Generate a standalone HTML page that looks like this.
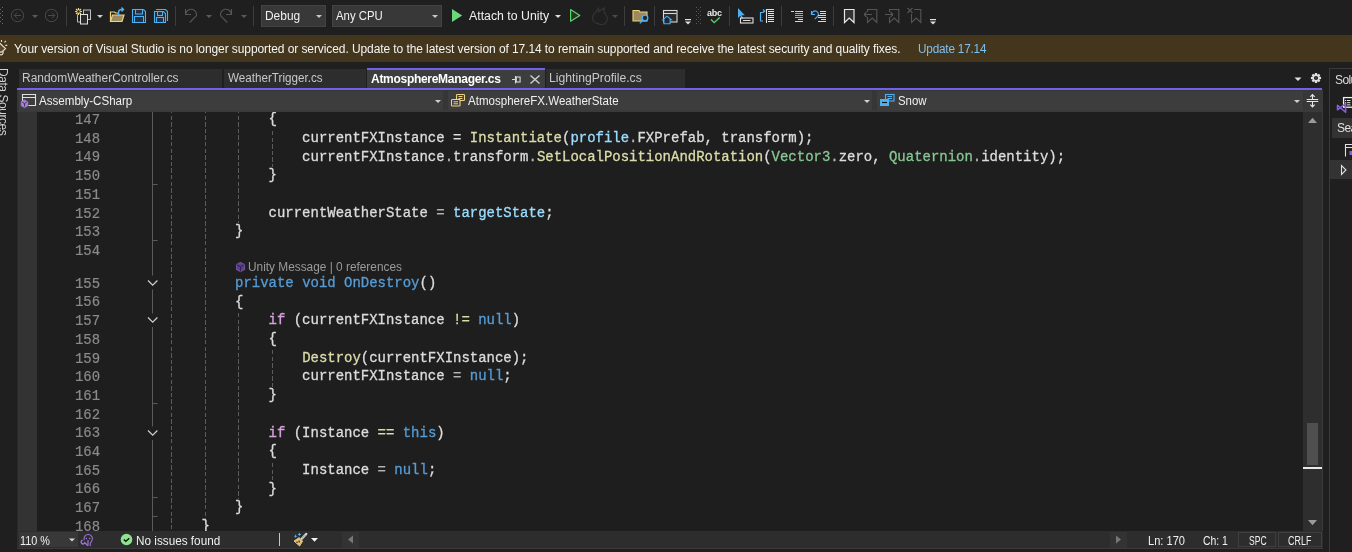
<!DOCTYPE html><html><head><meta charset="utf-8"><style>
*{margin:0;padding:0;box-sizing:border-box}
html,body{width:1352px;height:552px;overflow:hidden;background:#1f1f1f;position:relative;font-family:"Liberation Sans",sans-serif;color:#dcdcdc}
.a{position:absolute}
.ui{position:absolute;font-family:"Liberation Sans",sans-serif;font-size:12px;line-height:14px;white-space:pre}
.code{position:absolute;-webkit-text-stroke:0.3px currentColor;font-family:"Liberation Mono",monospace;font-size:13.98px;line-height:18.7px;white-space:pre;color:#dcdcdc}
.ln{position:absolute;-webkit-text-stroke:0.2px currentColor;font-family:"Liberation Mono",monospace;font-size:13.93px;line-height:18.7px;color:#8a8a8a;text-align:right;width:60px;white-space:pre}
.kw{color:#569cd6}.ctl{color:#d8a0df}.fn{color:#dcdcaa}.par{color:#9cdcfe}.st{color:#86c691}.op{color:#b4b4b4}
.guide{position:absolute;width:1px;background:repeating-linear-gradient(to bottom,#5c5c5c 0 4.4px,transparent 4.4px 6.6px)}
</style></head><body><div class="a" style="left:0;top:0;width:1352px;height:552px;will-change:transform;overflow:hidden">
<div class="a" style="left:0px;top:0px;width:1352px;height:35px;background:#1f1f1f;"></div>
<div class="a" style="left:261px;top:5px;width:65px;height:22px;background:#383838;border:1px solid #434343"></div>
<div class="ui" style="left:264.61px;top:9px;color:#f0f0f0;transform:scaleX(0.9941);transform-origin:0 0;">Debug</div>
<div class="a" style="left:332px;top:5px;width:110px;height:22px;background:#383838;border:1px solid #434343"></div>
<div class="ui" style="left:335.80px;top:9px;color:#f0f0f0;transform:scaleX(0.9469);transform-origin:0 0;">Any CPU</div>
<div class="ui" style="left:469.00px;top:9px;color:#f0f0f0;transform:scaleX(1.0256);transform-origin:0 0;">Attach to Unity</div>
<div class="ui" style="left:707px;top:8px;font-size:9px;line-height:10px;font-weight:bold;color:#e8e8e8;letter-spacing:-0.2px">abc</div>
<div class="a" style="left:0px;top:35px;width:1352px;height:27px;background:#44361c;"></div>
<div class="ui" style="left:14.00px;top:41.5px;color:#f4f4f4;letter-spacing:-0.085px">Your version of Visual Studio is no longer supported or serviced. Update to the latest version of 17.14 to remain supported and receive the latest security and quality fixes.</div>
<div class="ui" style="left:918.02px;top:41.5px;color:#7cc0f4;transform:scaleX(0.9797);transform-origin:0 0;letter-spacing:-0.2px">Update 17.14</div>
<div class="a" style="left:19px;top:69px;width:203px;height:19px;background:#2d2d2d;"></div>
<div class="ui" style="left:22.10px;top:70.5px;color:#c8c8c8;transform:scaleX(0.9962);transform-origin:0 0;">RandomWeatherController.cs</div>
<div class="a" style="left:224px;top:69px;width:142px;height:19px;background:#2d2d2d;"></div>
<div class="ui" style="left:228.10px;top:70.5px;color:#c8c8c8;transform:scaleX(0.9711);transform-origin:0 0;">WeatherTrigger.cs</div>
<div class="a" style="left:367px;top:68px;width:178px;height:20px;background:#3d3d3d;border-top:2px solid #7262ea"></div>
<div class="ui" style="left:371.10px;top:71.5px;color:#ffffff;transform:scaleX(1.0015);transform-origin:0 0;font-weight:bold;letter-spacing:-0.3px">AtmosphereManager.cs</div>
<div class="a" style="left:546px;top:69px;width:139px;height:19px;background:#2d2d2d;"></div>
<div class="ui" style="left:549.38px;top:70.5px;color:#c8c8c8;transform:scaleX(1.0156);transform-origin:0 0;">LightingProfile.cs</div>
<div class="a" style="left:17px;top:88px;width:1305px;height:2px;background:#7262ea;"></div>
<div class="a" style="left:17px;top:90px;width:1305px;height:22px;background:#363636;"></div>
<div class="a" style="left:19px;top:91px;width:424px;height:19px;background:#3d3d3d;"></div>
<div class="a" style="left:448px;top:91px;width:424px;height:19px;background:#3d3d3d;"></div>
<div class="a" style="left:877px;top:91px;width:426px;height:19px;background:#3d3d3d;"></div>
<div class="a" style="left:1304px;top:91px;width:18px;height:19px;background:#383838;"></div>
<div class="ui" style="left:38.70px;top:93.5px;color:#f0f0f0;transform:scaleX(0.9649);transform-origin:0 0;">Assembly-CSharp</div>
<div class="ui" style="left:468.00px;top:93.5px;color:#f0f0f0;transform:scaleX(0.9622);transform-origin:0 0;">AtmosphereFX.WeatherState</div>
<div class="ui" style="left:897.70px;top:93.5px;color:#f0f0f0;transform:scaleX(0.9500);transform-origin:0 0;">Snow</div>
<div class="a" style="left:17px;top:110px;width:1305px;height:2px;background:#3a3a3a;"></div>
<div class="a" style="left:17px;top:112px;width:1286px;height:419px;background:#1e1e1e;"></div>
<div class="a" style="left:17px;top:112px;width:1px;height:419px;background:#2a2a2a;"></div>
<div class="a" style="left:18px;top:112px;width:19px;height:419px;background:#333333;"></div>
<div class="a" style="left:17px;top:112px;width:1286px;height:419px;overflow:hidden">
<div class="guide" style="left:154px;top:-2.8px;height:421.8px"></div>
<div class="guide" style="left:188px;top:-2.8px;height:421.8px"></div>
<div class="guide" style="left:221px;top:-2.8px;height:114.0px"></div>
<div class="guide" style="left:255px;top:18.5px;height:36.6px"></div>
<div class="guide" style="left:221px;top:200.8px;height:186.3px"></div>
<div class="guide" style="left:255px;top:238.3px;height:36.6px"></div>
<div class="guide" style="left:255px;top:350.5px;height:17.9px"></div>
<div class="ln" style="left:23px;top:-1.00px">147</div>
<div class="code" style="left:151.0px;top:-1.80px">            {</div>
<div class="ln" style="left:23px;top:17.70px">148</div>
<div class="code" style="left:151.0px;top:16.90px">                currentFXInstance = <span class="fn">Instantiate</span>(<span class="par">profile</span><span class="op">.</span>FXPrefab, transform);</div>
<div class="ln" style="left:23px;top:36.40px">149</div>
<div class="code" style="left:151.0px;top:35.60px">                currentFXInstance<span class="op">.</span>transform<span class="op">.</span><span class="fn">SetLocalPositionAndRotation</span>(<span class="st">Vector3</span><span class="op">.</span>zero, <span class="st">Quaternion</span><span class="op">.</span>identity);</div>
<div class="ln" style="left:23px;top:55.10px">150</div>
<div class="code" style="left:151.0px;top:54.30px">            }</div>
<div class="ln" style="left:23px;top:73.80px">151</div>
<div class="code" style="left:151.0px;top:73.00px"></div>
<div class="ln" style="left:23px;top:92.50px">152</div>
<div class="code" style="left:151.0px;top:91.70px">            currentWeatherState <span class="op">=</span> <span class="par">targetState</span>;</div>
<div class="ln" style="left:23px;top:111.20px">153</div>
<div class="code" style="left:151.0px;top:110.40px">        }</div>
<div class="ln" style="left:23px;top:129.90px">154</div>
<div class="code" style="left:151.0px;top:129.10px"></div>
<div class="ln" style="left:23px;top:162.70px">155</div>
<div class="code" style="left:151.0px;top:161.90px">        <span class="kw">private</span> <span class="kw">void</span> <span class="kw">OnDestroy</span>()</div>
<div class="ln" style="left:23px;top:181.40px">156</div>
<div class="code" style="left:151.0px;top:180.60px">        {</div>
<div class="ln" style="left:23px;top:200.10px">157</div>
<div class="code" style="left:151.0px;top:199.30px">            <span class="ctl">if</span> (currentFXInstance <span class="fn">!=</span> <span class="kw">null</span>)</div>
<div class="ln" style="left:23px;top:218.80px">158</div>
<div class="code" style="left:151.0px;top:218.00px">            {</div>
<div class="ln" style="left:23px;top:237.50px">159</div>
<div class="code" style="left:151.0px;top:236.70px">                <span class="fn">Destroy</span>(currentFXInstance);</div>
<div class="ln" style="left:23px;top:256.20px">160</div>
<div class="code" style="left:151.0px;top:255.40px">                currentFXInstance <span class="op">=</span> <span class="kw">null</span>;</div>
<div class="ln" style="left:23px;top:274.90px">161</div>
<div class="code" style="left:151.0px;top:274.10px">            }</div>
<div class="ln" style="left:23px;top:293.60px">162</div>
<div class="code" style="left:151.0px;top:292.80px"></div>
<div class="ln" style="left:23px;top:312.30px">163</div>
<div class="code" style="left:151.0px;top:311.50px">            <span class="ctl">if</span> (Instance <span class="fn">==</span> <span class="kw">this</span>)</div>
<div class="ln" style="left:23px;top:331.00px">164</div>
<div class="code" style="left:151.0px;top:330.20px">            {</div>
<div class="ln" style="left:23px;top:349.70px">165</div>
<div class="code" style="left:151.0px;top:348.90px">                Instance <span class="op">=</span> <span class="kw">null</span>;</div>
<div class="ln" style="left:23px;top:368.40px">166</div>
<div class="code" style="left:151.0px;top:367.60px">            }</div>
<div class="ln" style="left:23px;top:387.10px">167</div>
<div class="code" style="left:151.0px;top:386.30px">        }</div>
<div class="ln" style="left:23px;top:405.80px">168</div>
<div class="code" style="left:151.0px;top:405.00px">    }</div>
</div>
<div class="ui" style="left:248.31px;top:260.1px;color:#9a9a9a;transform:scaleX(0.9877);transform-origin:0 0;">Unity Message | 0 references</div>
<div class="a" style="left:1303px;top:112px;width:19px;height:419px;background:#2e2e2e;"></div>
<div class="a" style="left:1307px;top:423px;width:11px;height:42px;background:#4f4f4f;"></div>
<div class="a" style="left:1303px;top:467px;width:19px;height:2px;background:#e8e8e8;"></div>
<div class="a" style="left:1322px;top:90px;width:1px;height:441px;background:#3a3a3a;"></div>
<div class="a" style="left:17px;top:531px;width:1306px;height:17px;background:#2d2d2d;"></div>
<div class="a" style="left:17px;top:548px;width:1306px;height:1px;background:#3a3a3a;"></div>
<div class="a" style="left:19px;top:532px;width:59px;height:15px;background:#383838;"></div>
<div class="ui" style="left:20.20px;top:533.5px;color:#f0f0f0;transform:scaleX(0.9030);transform-origin:0 0;">110 %</div>
<div class="ui" style="left:136.32px;top:533.5px;color:#f0f0f0;transform:scaleX(0.9788);transform-origin:0 0;">No issues found</div>
<div class="a" style="left:279px;top:533px;width:1px;height:13px;background:#c0c8d8;"></div>
<div class="a" style="left:342px;top:532px;width:17px;height:16px;background:#333333;"></div>
<div class="a" style="left:359px;top:532px;width:751px;height:16px;background:#2d2d2d;"></div>
<div class="a" style="left:1110px;top:532px;width:17px;height:16px;background:#333333;"></div>
<div class="ui" style="left:1148.48px;top:533.5px;color:#f0f0f0;transform:scaleX(0.9231);transform-origin:0 0;">Ln: 170</div>
<div class="ui" style="left:1203.40px;top:533.5px;color:#f0f0f0;transform:scaleX(0.8690);transform-origin:0 0;">Ch: 1</div>
<div class="a" style="left:1238px;top:532px;width:38px;height:15px;background:#2d2d2d;border:1px solid #3f3f3f"></div>
<div class="ui" style="left:1248.90px;top:533.5px;color:#f0f0f0;transform:scaleX(0.7125);transform-origin:0 0;">SPC</div>
<div class="a" style="left:1278px;top:532px;width:44px;height:15px;background:#2d2d2d;border:1px solid #3f3f3f"></div>
<div class="ui" style="left:1287.90px;top:533.5px;color:#f0f0f0;transform:scaleX(0.7452);transform-origin:0 0;">CRLF</div>
<div class="a" style="left:1329px;top:68px;width:23px;height:484px;background:#1f1f1f;border-left:1px solid #3a3a3a;border-top:1px solid #3a3a3a"></div>
<div class="ui" style="left:1335.00px;top:73px;color:#dcdcdc;letter-spacing:-0.6px">Solution Explorer</div>
<div class="a" style="left:1332px;top:118px;width:20px;height:20px;background:#333333;"></div>
<div class="ui" style="left:1337.00px;top:121px;color:#e0e0e0;letter-spacing:-0.6px">Search</div>
<div class="a" style="left:1330px;top:160px;width:22px;height:19px;background:#333333;"></div>
<div class="ui" style="left:-4px;top:68px;writing-mode:vertical-rl;color:#d0d0d0;font-size:12px;line-height:14px;letter-spacing:-0.45px">Data Sources</div>
<svg class="a" style="left:0;top:0;position:absolute;overflow:visible" width="1352" height="552" viewBox="0 0 1352 552"><rect x="2" y="7" width="1" height="1" fill="#6a6a6a"/><rect x="2" y="11" width="1" height="1" fill="#6a6a6a"/><rect x="2" y="15" width="1" height="1" fill="#6a6a6a"/><rect x="2" y="19" width="1" height="1" fill="#6a6a6a"/><rect x="2" y="23" width="1" height="1" fill="#6a6a6a"/><rect x="0" y="9" width="1" height="1" fill="#6a6a6a"/><rect x="0" y="13" width="1" height="1" fill="#6a6a6a"/><rect x="0" y="17" width="1" height="1" fill="#6a6a6a"/><rect x="0" y="21" width="1" height="1" fill="#6a6a6a"/><circle cx="17.5" cy="15.5" r="6.2" fill="none" stroke="#4a4a4a" stroke-width="1"/><path d="M14.2 15.5H21M14.2 15.5l3 -3M14.2 15.5l3 3" fill="none" stroke="#4a4a4a" stroke-width="1"/><circle cx="51.5" cy="15.5" r="6.2" fill="none" stroke="#4a4a4a" stroke-width="1"/><path d="M48 15.5H54.8M54.8 15.5l-3 -3M54.8 15.5l-3 3" fill="none" stroke="#4a4a4a" stroke-width="1"/><path d="M32 15h6l-3 3z" fill="#5a5a5a"/><rect x="66" y="6" width="1" height="20" fill="#3d3d3d"/><g stroke="#f5d67b" stroke-width="1.2" fill="none"><path d="M78.5 8v7M75 11.5h7M76 9l5 5M81 9l-5 5"/></g><circle cx="78.5" cy="11.5" r="1.3" fill="#1f1f1f"/><rect x="83.5" y="10" width="7" height="9.5" fill="#2a2a2a" stroke="#bdbdbd" stroke-width="1"/><path d="M77.5 14.5v7.5h3" fill="none" stroke="#bdbdbd" stroke-width="1"/><rect x="80.5" y="14.5" width="7" height="9.5" fill="#2a2a2a" stroke="#e0e0e0" stroke-width="1"/><path d="M97 15h6l-3 3z" fill="#d0d0d0"/><path d="M110.5 21.5v-9.5h4l1 1h3v2" fill="none" stroke="#f0d283" stroke-width="1.2"/><path d="M110.5 21.5l2 -6.5h11.5l-2 6.5z" fill="#9a8a5c" stroke="#f0d283" stroke-width="1.2"/><path d="M118.5 15v-2.5a3 3 0 0 1 3 -3h2M121.5 7.5l2 2l-2 2" fill="none" stroke="#4fb0f0" stroke-width="1.4"/><path d="M132.5 9.5H143.5L145.5 11.5V22.5H132.5Z" fill="#1f2a33" stroke="#4cb0f2" stroke-width="1.1"/><rect x="135.5" y="9.5" width="7" height="4.5" fill="#243240" stroke="#4cb0f2" stroke-width="1.05"/><rect x="134.5" y="16.5" width="9" height="6" fill="#243240" stroke="#4cb0f2" stroke-width="1.05"/><path d="M156 9.5H165.5L167.5 11.5V21" fill="none" stroke="#4cb0f2" stroke-width="1.1"/><path d="M154.5 11.5H163.5L165.5 13.5V22.5H154.5Z" fill="#1f2a33" stroke="#4cb0f2" stroke-width="1.1"/><rect x="157.5" y="11.5" width="5" height="4" fill="#243240" stroke="#4cb0f2" stroke-width="1.05"/><rect x="156.5" y="17.5" width="7" height="5" fill="#243240" stroke="#4cb0f2" stroke-width="1.05"/><rect x="175" y="6" width="1" height="20" fill="#3d3d3d"/><path d="M185.5 9v5.5h5.5M185.8 14.2a5 5 0 0 1 10.7 0.8l-0.3 1l-6.5 6.5" fill="none" stroke="#555" stroke-width="1.1"/><path d="M206 15h6l-3 3z" fill="#5a5a5a"/><path d="M231.5 9v5.5h-5.5M231.2 14.2a5 5 0 0 0 -10.7 0.8l0.3 1l6.5 6.5" fill="none" stroke="#555" stroke-width="1.1"/><path d="M241 15h6l-3 3z" fill="#5a5a5a"/><rect x="253" y="6" width="1" height="20" fill="#3d3d3d"/><path d="M316 15h6l-3 3z" fill="#c8c8c8"/><path d="M432 15h6l-3 3z" fill="#c8c8c8"/><path d="M452 9v13l10.2 -6.5z" fill="#6cd67a"/><path d="M555 15h6l-3 3z" fill="#e0e0e0"/><path d="M570.6 9.6v11.6l9.2 -5.8z" fill="#263326" stroke="#5fd36b" stroke-width="1.2" stroke-linejoin="round"/><path d="M598 23.5a5.5 5.5 0 0 1 -5.5 -5.5c0 -4 4 -6 6 -10c0.5 2 -0.5 3 0 4c1.5 -2 4 -3 6 -4c-1 2 -0.5 4 0.5 6a5.5 5.5 0 0 1 -7 9.5z" fill="none" stroke="#333333" stroke-width="1.3"/><path d="M612 15h6l-3 3z" fill="#4a4a4a"/><rect x="624" y="6" width="1" height="20" fill="#3d3d3d"/><path d="M633 10.5h6l1 1.5h7v9h-14z" fill="#9a8a5c" stroke="#f0d283" stroke-width="1.1"/><circle cx="645" cy="18" r="2.8" fill="#1f2a33" stroke="#4cb0f2" stroke-width="1.3"/><path d="M643 20.2l-3.2 3.2" stroke="#4cb0f2" stroke-width="1.3"/><rect x="654" y="6" width="1" height="20" fill="#3d3d3d"/><rect x="663.5" y="10.5" width="13.5" height="11.5" fill="#2a2a2a" stroke="#d8d8d8" stroke-width="1.1"/><path d="M664 13.5h12.5" stroke="#d8d8d8" stroke-width="1.1"/><path d="M662.7 19.8l4.3 -3.6l4.3 3.6h-1.2v4h-6.2v-4z" fill="#1f2a33" stroke="#4cb0f2" stroke-width="1.1"/><rect x="685" y="19" width="6" height="1.2" fill="#e0e0e0"/><path d="M685 21.5h6l-3 3z" fill="#e0e0e0"/><rect x="696" y="7" width="1" height="1" fill="#5a5a5a"/><rect x="700" y="7" width="1" height="1" fill="#5a5a5a"/><rect x="696" y="11" width="1" height="1" fill="#5a5a5a"/><rect x="700" y="11" width="1" height="1" fill="#5a5a5a"/><rect x="696" y="15" width="1" height="1" fill="#5a5a5a"/><rect x="700" y="15" width="1" height="1" fill="#5a5a5a"/><rect x="696" y="19" width="1" height="1" fill="#5a5a5a"/><rect x="700" y="19" width="1" height="1" fill="#5a5a5a"/><rect x="696" y="23" width="1" height="1" fill="#5a5a5a"/><rect x="700" y="23" width="1" height="1" fill="#5a5a5a"/><rect x="698" y="9" width="1" height="1" fill="#5a5a5a"/><rect x="698" y="13" width="1" height="1" fill="#5a5a5a"/><rect x="698" y="17" width="1" height="1" fill="#5a5a5a"/><rect x="698" y="21" width="1" height="1" fill="#5a5a5a"/><path d="M711 19.5l3.2 3.2l5.5 -5.2" fill="none" stroke="#5fd36b" stroke-width="1.3"/><rect x="729" y="6" width="1" height="20" fill="#3d3d3d"/><path d="M738 8v10l2.3 -2.3l1.7 3.3l1.2 -.6l-1.6 -3.2h3.2z" fill="#4cb0f2"/><rect x="740.5" y="18" width="12.5" height="5" fill="none" stroke="#e0e0e0" stroke-width="1.1"/><path d="M743 20.5h7.5" stroke="#e0e0e0" stroke-width="1"/><path d="M763 21h-2.5v-8.5h2.5l1.5 -1.5M763 9.5l1.8 1.5l-1.8 1.5" fill="none" stroke="#4cb0f2" stroke-width="1.2"/><path d="M766.5 9v14M766 9.5h8M768 11.5h6M768 13.5h6M768 15.5h6M768 17.5h6M768 19.5h6M768 21.5h6" fill="none" stroke="#e0e0e0" stroke-width="1.1"/><rect x="781" y="6" width="1" height="20" fill="#3d3d3d"/><path d="M791 11.5h3M795 11.5h8M798 19.5h5M795 21.5h8" stroke="#d8d8d8" stroke-width="1.1"/><path d="M795 13.5h8M795 15.5h8M795 17.5h8" stroke="#6ad66a" stroke-width="1.2"/><path d="M811.5 11v3.5h3.5M811.8 14.2a3.3 3.3 0 1 1 5.5 2.5l-2.5 2.5" fill="none" stroke="#4cb0f2" stroke-width="1.2"/><path d="M820 11.5h6M820 13.5h6M818 15.5h8M818 17.5h8M821 19.5h5M818 21.5h8" stroke="#d8d8d8" stroke-width="1.1"/><rect x="833" y="6" width="1" height="20" fill="#3d3d3d"/><path d="M844.5 9.5h9.5v13l-4.75 -4.5l-4.75 4.5z" fill="#333" stroke="#e8e8e8" stroke-width="1.2"/><path d="M867.5 9.5h9.3v13l-4.65 -4.5l-4.65 4.5z" fill="none" stroke="#555" stroke-width="1.1"/><rect x="866" y="12" width="4" height="5" fill="#1f1f1f"/><path d="M864 14.5h8M864 14.5l2.5 -2.5M864 14.5l2.5 2.5" fill="none" stroke="#555" stroke-width="1.1"/><path d="M889.5 9.5h9.3v13l-4.65 -4.5l-4.65 4.5z" fill="none" stroke="#555" stroke-width="1.1"/><rect x="888" y="12" width="4" height="5" fill="#1f1f1f"/><path d="M885 14.5h8M893 14.5l-2.5 -2.5M893 14.5l-2.5 2.5" fill="none" stroke="#555" stroke-width="1.1"/><path d="M911.5 9.5h9.3v13l-4.65 -4.5l-4.65 4.5z" fill="none" stroke="#555" stroke-width="1.1"/><rect x="908" y="8" width="6" height="6" fill="#1f1f1f"/><path d="M907.5 8l5 5M912.5 8l-5 5" fill="none" stroke="#555" stroke-width="1.1"/><rect x="930" y="19" width="6" height="1.2" fill="#e0e0e0"/><path d="M930 21.5h6l-3 3z" fill="#e0e0e0"/><path d="M-1 42.5L5.6 48.6L1.5 52.2L-1 52z" fill="#5a4a30" stroke="#e2dccf" stroke-width="1.2" stroke-linejoin="round"/><path d="M2.6 51.2a2.3 2.3 0 0 1 -1.2 3.6l-2 -0.3" fill="none" stroke="#e2dccf" stroke-width="1.2"/><path d="M1.5 40v2M4.4 42.4l1.5 -1.5M5.3 45.4h2" stroke="#e2dccf" stroke-width="1.1"/><path d="M512 79.5h3.5M515.5 76v7.5" stroke="#d8d8d8" stroke-width="1.1"/><rect x="516.3" y="77" width="3.8" height="5" fill="none" stroke="#d8d8d8" stroke-width="1.1"/><path d="M530.5 75.5l9 8M539.5 75.5l-9 8" stroke="#d0d0d0" stroke-width="1.4"/><path d="M1294.5 77.5h7l-3.5 3.5z" fill="#e0e0e0"/><path d="M1314.92 72.91L1317.08 72.91L1317.30 74.54L1317.53 74.63L1318.83 73.64L1320.36 75.17L1319.37 76.47L1319.46 76.70L1321.09 76.92L1321.09 79.08L1319.46 79.30L1319.37 79.53L1320.36 80.83L1318.83 82.36L1317.53 81.37L1317.30 81.46L1317.08 83.09L1314.92 83.09L1314.70 81.46L1314.47 81.37L1313.17 82.36L1311.64 80.83L1312.63 79.53L1312.54 79.30L1310.91 79.08L1310.91 76.92L1312.54 76.70L1312.63 76.47L1311.64 75.17L1313.17 73.64L1314.47 74.63L1314.70 74.54Z M1318.1 78a2.1 2.1 0 1 0 -4.2 0a2.1 2.1 0 1 0 4.2 0Z" fill="#e0e0e0" fill-rule="evenodd"/><circle cx="1316" cy="78" r="0.8" fill="#666"/><path d="M22.5 102v-7.5h13v11h-7M23 97.5h12.5" fill="none" stroke="#e0e0e0" stroke-width="1.1"/><path d="M24.5 100l3.3 1.9v3.8l-3.3 1.9l-3.3 -1.9v-3.8z" fill="#a77ce0" stroke="#a77ce0" stroke-width="0.8"/><path d="M22.3 102.2l2.2 1.3l2.2 -1.3M24.5 103.5v3" fill="none" stroke="#3d3d3d" stroke-width="1"/><path d="M435 100h6l-3 3z" fill="#d0d0d0"/><rect x="456.5" y="94.5" width="8" height="6" rx="0.8" fill="#3d3d3d" stroke="#f0d283" stroke-width="1.1"/><path d="M458.5 96.5h4M458.5 98.5h4" stroke="#f0d283" stroke-width="1"/><rect x="451.5" y="99.5" width="8.5" height="6.5" rx="0.8" fill="#3d3d3d" stroke="#f0d283" stroke-width="1.1"/><path d="M453.5 101.8h4.5M453.5 103.8h4.5" stroke="#f0d283" stroke-width="1"/><path d="M864 100h6l-3 3z" fill="#d0d0d0"/><rect x="885.5" y="94.5" width="8.5" height="6.5" fill="#3d3d3d" stroke="#4cb0f2" stroke-width="1.1"/><path d="M887.5 96.5h4.5M887.5 98.5h4.5" stroke="#4cb0f2" stroke-width="1"/><rect x="880" y="99" width="9" height="7" fill="#4cb0f2"/><path d="M882 102.5h5" stroke="#111" stroke-width="1.1"/><path d="M1294 100h6l-3 3z" fill="#d0d0d0"/><path d="M1306.7 99.5h11.5M1306.7 101.5h11.5M1312.5 94.5v4.5M1312.5 102v5M1310.3 96.8l2.2 -2.2l2.2 2.2M1310.3 104.7l2.2 2.2l2.2 -2.2" fill="none" stroke="#e6e6e6" stroke-width="1.1"/><path d="M240.5 262.5l4 2.2v4.6l-4 2.2l-4 -2.2v-4.6z" fill="#5a3f88" stroke="#6e50a0" stroke-width="1.1"/><path d="M236.5 264.7l4 2.2l4 -2.2M240.5 266.9v4.6" fill="none" stroke="#2a2040" stroke-width="0.9"/><path d="M152.5 112V275.5" stroke="#5a5a5a" stroke-width="1"/><path d="M152.5 184.5h5" stroke="#5a5a5a" stroke-width="1"/><path d="M152.5 240.5h5" stroke="#5a5a5a" stroke-width="1"/><path d="M148 280.5l4.7 4.7l4.7 -4.7" fill="none" stroke="#d0d0d0" stroke-width="1.2"/><path d="M152.5 289.5V313.5" stroke="#5a5a5a" stroke-width="1"/><path d="M148 317.5l4.7 4.7l4.7 -4.7" fill="none" stroke="#d0d0d0" stroke-width="1.2"/><path d="M152.5 327V426.5" stroke="#5a5a5a" stroke-width="1"/><path d="M152.5 403.5h5" stroke="#5a5a5a" stroke-width="1"/><path d="M148 430.5l4.7 4.7l4.7 -4.7" fill="none" stroke="#d0d0d0" stroke-width="1.2"/><path d="M152.5 440V531" stroke="#5a5a5a" stroke-width="1"/><path d="M152.5 497.5h5" stroke="#5a5a5a" stroke-width="1"/><path d="M152.5 516.5h5" stroke="#5a5a5a" stroke-width="1"/><path d="M1308 123h9l-4.5 -5.3z" fill="#9a9a9a"/><path d="M1308 520h9l-4.5 5.3z" fill="#9a9a9a"/><path d="M69 538.5h6l-3 3z" fill="#d8d8d8"/><path d="M84.3 540.2A4.2 4.2 0 1 1 91.6 541.2L90.3 543.2V546" fill="none" stroke="#9a70d4" stroke-width="1.1"/><path d="M82.6 540.2a1.9 1.9 0 1 0 2.2 2.6l3.3 3" fill="none" stroke="#9a70d4" stroke-width="1.5"/><path d="M88 540v5.5" stroke="#9f74d8" stroke-width="1.2"/><circle cx="86.4" cy="538.4" r="0.75" fill="#9f74d8"/><circle cx="89.6" cy="538.4" r="0.75" fill="#9f74d8"/><circle cx="126.5" cy="539.5" r="5.8" fill="#8fe28f"/><path d="M123.8 539.5l2 1.8l3.5 -3" fill="none" stroke="#111" stroke-width="1.3"/><path d="M301.8 538.8L306.2 534" stroke="#d8d8d8" stroke-width="2.4" stroke-linecap="round"/><path d="M302.6 537.9l0.01 0M303.8 536.6l0.01 0M305 535.3l0.01 0" stroke="#666" stroke-width="0.9" stroke-linecap="round"/><path d="M294 541L299.2 537.6L302.6 541.2L299.6 546Z" fill="#e0c07a" stroke="#e0c07a" stroke-width="1" stroke-linejoin="round"/><path d="M296.3 541.5h1.4v1.6h-1.4zM298.5 540.6h1.4v1.8h-1.4z" fill="#4a3c22"/><path d="M295.6 534.3000000000001L296.15000000000003 535.6500000000001L297.5 536.2L296.15000000000003 536.75L295.6 538.1L295.05 536.75L293.70000000000005 536.2L295.05 535.6500000000001Z M299.4 532.5L299.95 533.85L301.29999999999995 534.4L299.95 534.9499999999999L299.4 536.3L298.84999999999997 534.9499999999999L297.5 534.4L298.84999999999997 533.85Z" fill="#5ab8f5"/><path d="M311 538h7l-3.5 3.8z" fill="#f4f4f4"/><path d="M353 535.5v8l-5 -4z" fill="#777"/><path d="M1116 535.5v8l5 -4z" fill="#777"/><rect x="1343.6" y="97.6" width="9" height="9.6" fill="#151515" stroke="#f0f0f0" stroke-width="1.3"/><path d="M1345 100.5h1.2M1347 100.5h3.5M1345 102.7h1.2M1347 102.7h3.5M1347 104.9h3.5" stroke="#e8e8e8" stroke-width="1"/><path d="M1337.5 105.2L1345.6 112.3V103.5L1337.5 109.8Z" fill="none" stroke="#8a5ee0" stroke-width="1.5" stroke-linejoin="round"/><path d="M1345.5 156.5v-12h7M1346 147.5h6" fill="none" stroke="#e0e0e0" stroke-width="1.1"/><rect x="1349.5" y="151" width="3" height="4" fill="#8a5ee0"/><path d="M1341.5 165.5v9l4.5 -4.5z" fill="none" stroke="#e0e0e0" stroke-width="1.1"/></svg>
</div></body></html>
